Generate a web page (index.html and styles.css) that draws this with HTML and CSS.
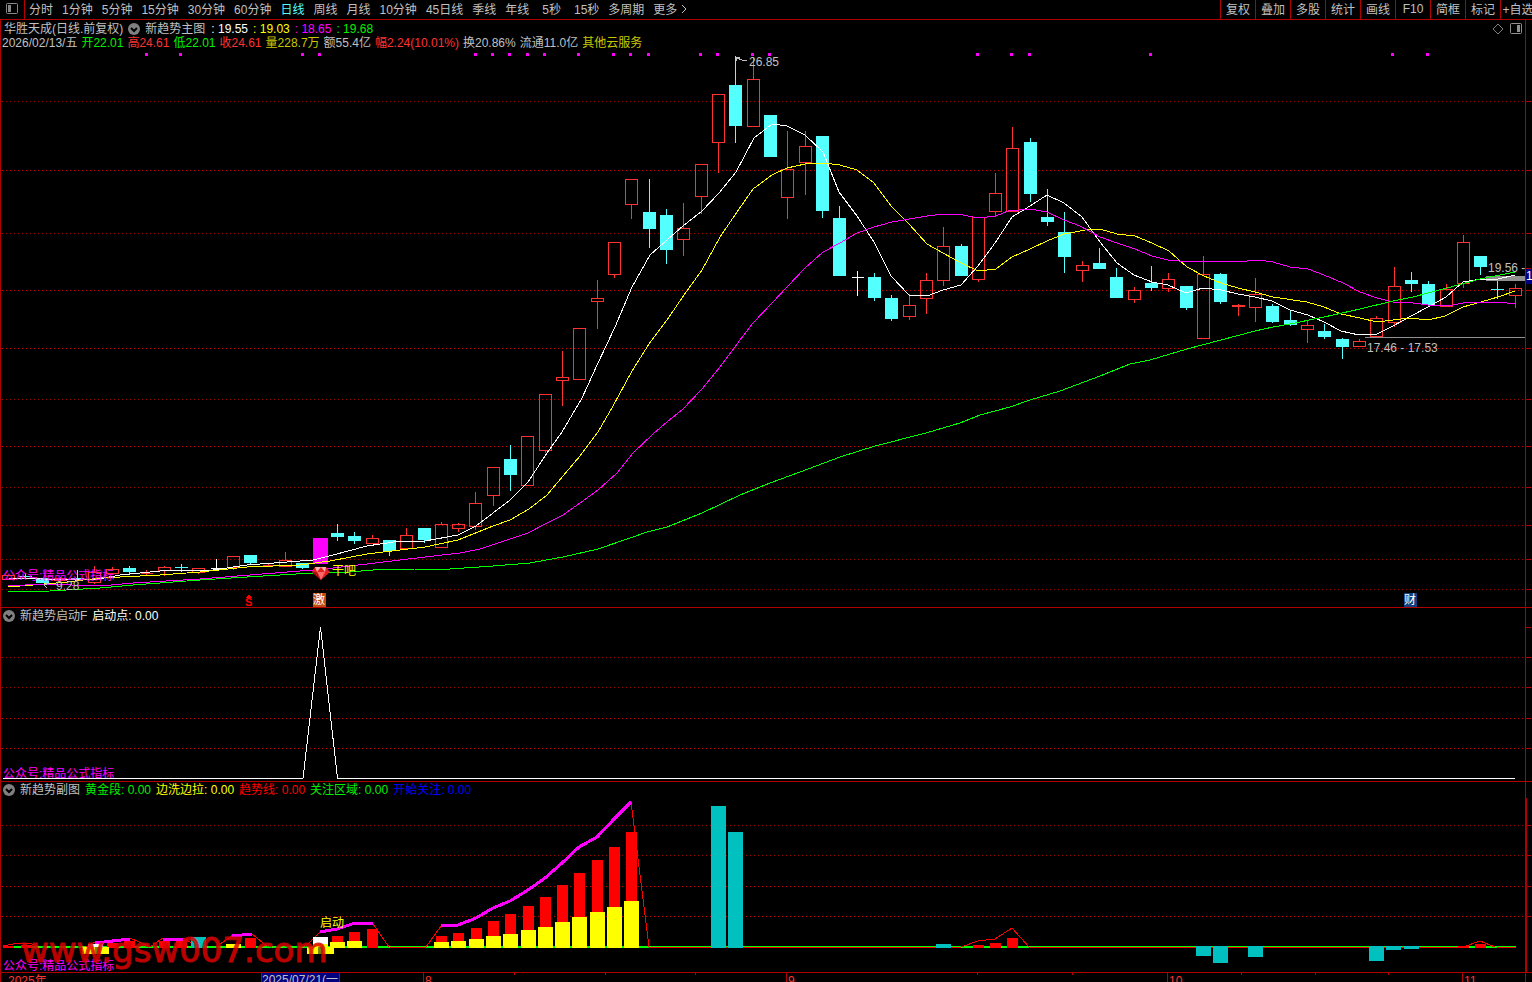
FILE: index.html
```
<!DOCTYPE html>
<html lang="zh-CN">
<head>
    <meta charset="UTF-8">
    <meta name="viewport" content="width=device-width, initial-scale=1.0">
    <title>华胜天成 日线</title>
    <link rel="stylesheet" href="styles.css">
</head>
<body>
    <div class="toolbar">
        <button class="layout-button" aria-label="侧栏">
            <svg width="12" height="12" viewBox="0 0 12 12"><rect x="0.5" y="0.5" width="11" height="10" rx="1" fill="none" stroke="#888"/><rect x="2" y="2" width="3" height="7" fill="#888"/></svg>
        </button>
        <nav class="periods">
            <button>分时</button>
            <button>1分钟</button>
            <button>5分钟</button>
            <button>15分钟</button>
            <button>30分钟</button>
            <button>60分钟</button>
            <button class="active">日线</button>
            <button>周线</button>
            <button>月线</button>
            <button>10分钟</button>
            <button>45日线</button>
            <button>季线</button>
            <button>年线</button>
            <button class="seconds">5秒</button>
            <button class="seconds">15秒</button>
            <button>多周期</button>
            <button class="more">更多<svg width="6" height="10" viewBox="0 0 6 10"><path d="M1 1l4 4-4 4" fill="none" stroke="#c0c0c0"/></svg></button>
        </nav>
        <div class="tools">
            <button>复权</button>
            <button>叠加</button>
            <button>多股</button>
            <button>统计</button>
            <button>画线</button>
            <button>F10</button>
            <button>简框</button>
            <button>标记</button>
            <button>+自选</button>
        </div>
    </div>

    <section class="panel">
        <div class="panel-head main-head">
            <div class="row title-row">
                <span>华胜天成(日线.前复权)</span>
                <button class="fold" aria-label="主图指标"><svg width="12" height="12" viewBox="0 0 12 12"><circle cx="6" cy="6" r="6" fill="#808080"/><path d="M3 5l3 3 3-3" fill="none" stroke="#000" stroke-width="2"/></svg></button>
                <span class="name">新趋势主图</span>
                <span class="white">: 19.55</span>
                <span class="yellow">: 19.03</span>
                <span class="magenta">: 18.65</span>
                <span class="green">: 19.68</span>
                <span class="corner">
                    <svg width="12" height="12" viewBox="0 0 12 12"><path d="M6 1l5 5-5 5-5-5z" fill="none" stroke="#808080"/></svg>
                    <svg width="12" height="12" viewBox="0 0 12 12"><rect x="0.5" y="0.5" width="11" height="10" rx="1" fill="none" stroke="#909090"/><rect x="7" y="2" width="3" height="7" fill="#909090"/></svg>
                </span>
            </div>
            <div class="row quote-row">
                <span>2026/02/13/五</span>
                <span class="green">开22.01</span>
                <span class="red">高24.61</span>
                <span class="green">低22.01</span>
                <span class="red">收24.61</span>
                <span class="gold">量228.7万</span>
                <span>额55.4亿</span>
                <span class="red">幅2.24(10.01%)</span>
                <span>换20.86%</span>
                <span>流通11.0亿</span>
                <span class="gold">其他云服务</span>
            </div>
        </div>
        <svg class="chart" id="main-chart" viewBox="1 50 1531 557"></svg>
    </section>

    <section class="panel">
        <div class="panel-head row">
            <button class="fold" aria-label="启动指标"><svg width="12" height="12" viewBox="0 0 12 12"><circle cx="6" cy="6" r="6" fill="#808080"/><path d="M3 5l3 3 3-3" fill="none" stroke="#000" stroke-width="2"/></svg></button>
            <span>新趋势启动F</span>
            <span class="white">启动点: 0.00</span>
        </div>
        <svg class="chart" id="start-chart" viewBox="1 624 1531 157"></svg>
    </section>

    <section class="panel">
        <div class="panel-head row">
            <button class="fold" aria-label="副图指标"><svg width="12" height="12" viewBox="0 0 12 12"><circle cx="6" cy="6" r="6" fill="#808080"/><path d="M3 5l3 3 3-3" fill="none" stroke="#000" stroke-width="2"/></svg></button>
            <span>新趋势副图</span>
            <span class="green">黄金段: 0.00</span>
            <span class="yellow">边洗边拉: 0.00</span>
            <span class="pure-red">趋势线: 0.00</span>
            <span class="green">关注区域: 0.00</span>
            <span class="blue">开始关注: 0.00</span>
        </div>
        <svg class="chart" id="sub-chart" viewBox="1 798 1531 174"></svg>
    </section>

    <svg class="chart axis" id="axis" viewBox="0 972 1532 22"></svg>

    <script src="chart.js"></script>
</body>
</html>
```
FILE: styles.css
```
* {
    box-sizing: border-box;
}

body {
    margin: 0;
    height: 100vh;
    overflow: hidden;
    background-color: #000;
    color: #c0c0c0;
    font-family: "Liberation Sans", "Noto Sans CJK SC", sans-serif;
    font-size: 12px;
}

button {
    background: none;
    border: none;
    padding: 0;
    color: inherit;
    font: inherit;
    white-space: nowrap;
    cursor: pointer;
}

svg {
    display: block;
}

.toolbar {
    display: flex;
    height: 20px;
    border-bottom: 1px solid #b00000;
    overflow: hidden;
}

.toolbar button {
    padding-bottom: 2px;
}

.toolbar .layout-button {
    width: 25px;
    padding-left: 6px;
    border-right: 1px solid #b00000;
}

.periods {
    display: flex;
    gap: 9px;
    padding-left: 4px;
    flex-grow: 1;
}

.periods .active {
    color: #54ffff;
}

.periods .seconds {
    margin-left: 4px;
}

.more {
    display: flex;
    align-items: center;
    gap: 4px;
}

.tools {
    display: flex;
    width: 312px;
    flex-shrink: 0;
}

.tools button {
    width: 35px;
    flex-shrink: 0;
    border-left: 1px solid #b00000;
}

.panel {
    border-left: 1px solid #b00000;
    border-bottom: 1px solid #b00000;
}

.panel-head {
    margin-right: 6px;
    border-right: 1px solid #b00000;
}

.row {
    display: flex;
    align-items: center;
    gap: 5px;
    height: 16px;
    padding-left: 2px;
    line-height: 14px;
    white-space: nowrap;
}

.main-head {
    padding-top: 2px;
}

.main-head .row {
    height: 14px;
}

.main-head .title-row {
    padding-left: 3px;
}

.main-head .quote-row {
    gap: 4px;
    padding-left: 1px;
}

.name {
    margin-right: 1px;
}

.corner {
    display: flex;
    gap: 6px;
    margin-left: auto;
    padding-right: 3px;
}

.white {
    color: #fff;
}

.yellow {
    color: #ff0;
}

.magenta {
    color: #f0f;
}

.green {
    color: #00f000;
}

.red {
    color: #ff3232;
}

.pure-red {
    color: #f00;
}

.gold {
    color: #c8c800;
}

.blue {
    color: #00f;
}

.chart {
    width: 100%;
    height: auto;
    font-size: 12px;
    shape-rendering: crispEdges;
}

.panel:last-of-type {
    border-bottom: none;
}

.chart .smooth {
    shape-rendering: auto;
}

.site-mark {
    font-family: "DejaVu Sans", sans-serif;
    font-size: 34px;
    fill: #dc0000;
    stroke: #dc0000;
    stroke-width: 1px;
    opacity: 0.85;
}

.small-bold {
    font-size: 11px;
    font-weight: bold;
}
```
FILE: chart.js
```
const RED = '#ff3232';
const CYAN = '#54ffff';
const BORDER = '#b00000';
const TEAL = '#00c0c0';

// x of the i-th trading day
function dayX(i) {
    return Math.floor(8.3 + 17.322 * i) + 0.5;
}

function line(x1, y1, x2, y2, color) {
    return `<line x1="${x1}" y1="${y1}" x2="${x2}" y2="${y2}" stroke="${color}"/>`;
}

function rect(x, y, w, h, fill) {
    return `<rect x="${x}" y="${y}" width="${w}" height="${h}" fill="${fill}"/>`;
}

function poly(points, color, width = 1) {
    return `<polyline points="${points}" fill="none" stroke="${color}" stroke-width="${width}"/>`;
}

function text(x, y, value, color, cls = '') {
    return `<text x="${x}" y="${y}" fill="${color}" class="${cls}">${value}</text>`;
}

function grid(dim, bright) {
    const row = (y, color) =>
        `<line x1="2" y1="${y + 0.5}" x2="1525" y2="${y + 0.5}" stroke="${color}" stroke-dasharray="1 3"/>` +
        line(1526, y + 0.5, 1531, y + 0.5, BORDER);
    return dim.map(y => row(y, '#a00000')).join('') + bright.map(y => row(y, '#c80000')).join('');
}

// [kind, high, top, bottom, low] - r: rising, c: falling, w: flat, m: signal bar
const candles = [
    ['r', 575, 575, 579, 579], ['c', 574, 576, 577, 578], ['c', 578, 578, 583, 583], ['r', 577, 578, 580, 580],
    ['c', 570, 578, 579, 581], ['r', 566, 572, 582, 583], ['r', 567, 569, 573, 574], ['c', 566, 568, 572, 574],
    ['r', 570, 573, 573, 575], ['r', 566, 567, 570, 575], ['c', 564, 567, 568, 572], ['r', 568, 568, 572, 573],
    ['w', 559, 568, 568, 568], ['r', 556, 556, 567, 569], ['c', 555, 555, 563, 564], ['r', 563, 565, 565, 567],
    ['r', 552, 560, 566, 566], ['c', 563, 563, 568, 569], ['m', 538, 538, 564, 564], ['c', 524, 533, 537, 541],
    ['c', 532, 536, 541, 544], ['r', 535, 538, 543, 543], ['c', 540, 540, 551, 556], ['r', 528, 535, 548, 548],
    ['c', 528, 528, 540, 543], ['r', 522, 524, 547, 547], ['r', 523, 524, 528, 531], ['r', 492, 503, 526, 529],
    ['r', 467, 467, 495, 505], ['c', 445, 459, 475, 491], ['r', 436, 436, 485, 485], ['r', 394, 394, 450, 452],
    ['r', 351, 377, 380, 405], ['r', 328, 328, 379, 379], ['r', 280, 298, 301, 328], ['r', 242, 242, 274, 277],
    ['r', 179, 179, 204, 218], ['c', 179, 212, 229, 248], ['c', 209, 215, 250, 264], ['r', 203, 228, 239, 255],
    ['r', 164, 164, 196, 213], ['r', 94, 94, 142, 172], ['c', 56, 85, 126, 143], ['r', 57, 79, 126, 126],
    ['c', 115, 115, 157, 157], ['r', 131, 169, 197, 218], ['r', 131, 146, 162, 194], ['c', 136, 136, 211, 218],
    ['c', 206, 218, 276, 276], ['w', 271, 277, 277, 296], ['c', 273, 277, 298, 301], ['c', 295, 298, 319, 321],
    ['r', 294, 305, 316, 319], ['r', 273, 280, 298, 313], ['r', 227, 246, 280, 285], ['c', 244, 246, 276, 276],
    ['r', 217, 217, 279, 281], ['r', 173, 193, 211, 215], ['r', 127, 148, 211, 211], ['c', 138, 142, 194, 202],
    ['c', 189, 217, 222, 226], ['c', 212, 232, 257, 273], ['r', 261, 265, 270, 281], ['c', 248, 263, 269, 269],
    ['c', 268, 277, 298, 298], ['r', 287, 290, 299, 302], ['c', 266, 283, 288, 291], ['r', 273, 279, 288, 291],
    ['c', 286, 286, 308, 310], ['r', 256, 274, 338, 338], ['c', 273, 274, 302, 304], ['r', 304, 305, 306, 315],
    ['r', 278, 294, 307, 321], ['c', 304, 306, 322, 323], ['c', 311, 320, 325, 326], ['r', 320, 325, 329, 342],
    ['c', 324, 331, 337, 339], ['c', 338, 339, 347, 359], ['r', 339, 341, 346, 346], ['r', 316, 318, 336, 336],
    ['r', 267, 286, 322, 326], ['c', 272, 280, 284, 292], ['c', 281, 284, 305, 305], ['r', 284, 289, 306, 306],
    ['r', 235, 242, 283, 287], ['c', 256, 256, 267, 275], ['c', 281, 289, 290, 299], ['r', 284, 288, 295, 307]
];

const averages = [
    ['#fff', '8,578 43,579 93,580 120,575 160,571 213,570 247,565 287,562 313,560 333,555 367,546 400,541 425,541 458,535 476,526 510,500 528,482 547,453 562,432 582,398 598,363 615,327 632,287 650,255 667,240 683,226 702,211 719,193 736,172 754,138 772,124 787,126 805,135 823,152 839,192 857,216 874,242 891,276 909,295 927,296 943,290 961,285 978,266 995,243 1012,217 1030,206 1047,195 1064,203 1082,217 1100,242 1117,263 1134,275 1152,282 1168,285 1186,293 1203,288 1221,290 1238,294 1255,297 1272,301 1290,310 1308,315 1324,322 1341,331 1359,335 1377,334 1393,326 1411,316 1428,307 1446,297 1463,282 1481,279 1498,279 1515,275'],
    ['#ff0', '8,587 33,585 67,582 100,578 160,575 200,572 247,567 300,565 330,561 367,554 400,550 425,547 458,540 493,526 510,520 529,509 547,495 563,476 580,456 598,432 613,406 632,371 649,344 667,320 684,295 702,270 720,237 737,212 753,189 772,175 787,168 805,164 823,163 840,165 857,170 874,183 892,207 909,224 927,244 943,253 961,263 978,271 996,269 1012,257 1030,249 1047,241 1064,234 1080,231 1091,229 1100,229 1117,234 1135,236 1152,243 1169,251 1187,267 1204,276 1221,283 1238,288 1255,292 1273,297 1307,302 1324,307 1341,314 1360,318 1377,322 1393,320 1410,318 1428,320 1445,316 1463,307 1481,302 1498,297 1515,291'],
    ['#f0f', '8,586 43,584 100,586 133,583 200,579 250,575 287,572 313,570 333,568 367,564 400,560 425,557 460,553 480,549 510,539 528,533 547,523 563,515 580,503 598,490 617,473 633,453 653,434 667,422 683,409 702,389 720,367 740,340 753,323 772,303 788,286 805,268 823,252 840,243 857,233 874,227 892,222 927,216 943,214 963,215 978,218 996,216 1008,211 1030,209 1047,212 1064,220 1080,226 1100,237 1117,243 1135,249 1152,256 1168,260 1179,261 1247,261 1258,260 1273,262 1290,267 1308,269 1324,275 1343,283 1360,292 1377,298 1393,302 1413,303 1428,305 1448,306 1463,303 1483,302 1507,303 1515,303'],
    ['#0f0', '8,592 50,591 100,588 133,585 200,580 247,577 313,573 350,572 373,570 415,569 450,569 493,566 530,563 563,557 598,549 630,538 647,532 667,527 702,513 740,495 770,483 800,472 840,457 875,446 926,433 960,423 980,415 1010,407 1030,400 1060,391 1100,376 1130,364 1150,360 1187,349 1221,340 1255,331 1273,327 1290,324 1324,317 1360,309 1393,301 1413,297 1447,288 1480,279 1515,272']
];

function drawCandle([kind, high, top, bottom, low], i) {
    const x = dayX(i);
    if (kind === 'm') {
        return rect(x - 7.5, top, 15, bottom - top, '#f0f');
    }
    if (kind === 'c') {
        return line(x, high, x, low, CYAN) + rect(x - 6.5, top, 13, bottom - top, CYAN);
    }
    if (top === bottom) {
        const color = kind === 'w' ? '#fff' : RED;
        return line(x, high, x, low, color) + line(x - 6, top + 0.5, x + 6, top + 0.5, color);
    }
    return line(x, high, x, top, RED) + line(x, bottom, x, low + 1, RED) +
        `<rect x="${x - 6}" y="${top + 0.5}" width="12" height="${bottom - top}" fill="none" stroke="${RED}"/>`;
}

function drawMain() {
    const dots = [146, 180, 302, 319, 475, 492, 509, 527, 544, 578, 613, 630, 648, 700, 717, 752, 769, 977, 1011, 1029, 1150, 1392, 1427];
    let out = grid([101, 233, 399, 487, 525, 559, 589], [170, 290, 348, 446]);
    out += dots.map(x => rect(x - 1, 53, 3, 3, '#f0f')).join('');
    out += candles.map(drawCandle).join('');

    // price gap bands
    out += rect(1365, 337, 160, 1, '#909090') + rect(1486, 276, 39, 5, '#909090');
    out += averages.map(([color, points]) => poly(points, color)).join('');
    out += line(1525.5, 50, 1525.5, 607, BORDER);
    out += line(1526, 268.5, 1531, 268.5, BORDER) + rect(1526, 269, 6, 15, '#000080') + text(1526, 280, '1', '#fff');

    out += poly('740,57 736,57 736,61', '#c0c0c0') + poly('737,58 742,60 747,61', '#c0c0c0');
    out += text(749, 66, '26.85', '#c0c0c0') + text(1488, 272, '19.56 -', '#c0c0c0');
    out += text(1367, 352, '17.46 - 17.53', '#c0c0c0');
    out += poly('49,583 44,585 47,588', '#c0c0c0') + text(56, 590, '9.28', '#c0c0c0');
    out += text(3, 580, '公众号:精品公式指标', '#f0f') + text(332, 575, '干吧', '#ff0');

    // signal gem
    out += '<g class="smooth"><path d="M315 567h11l4 5-9 8-9-8z" fill="#e02020"/>' +
        '<path d="M315 567l2 5 4-5 4 5 1-5z" fill="#ffb0b0"/><path d="M317 572h8l-4 8z" fill="#ff6868"/>' +
        '<path d="M312 572l5 0 4 8z" fill="#b01010"/></g>';
    out += '<path d="M245 598l4-3 4 3z" fill="#f00"/>' + text(245, 606, 'S', '#f00', 'small-bold');
    out += rect(313, 593, 13, 14, '#c04a10') + text(313, 604, '激', '#fff');
    out += rect(1404, 593, 13, 14, '#104080') + text(1404, 604, '财', '#fff');
    document.getElementById('main-chart').innerHTML = out;
}

function drawStart() {
    let out = grid([657, 687], [718, 748]);
    out += text(3, 778, '公众号:精品公式指标', '#f0f');
    out += poly('3,778.5 303,778.5 320.5,627 337.5,778.5 1515,778.5', '#fff');
    out += line(1525.5, 624, 1525.5, 781, BORDER) + line(1526, 627.5, 1531, 627.5, BORDER);
    document.getElementById('start-chart').innerHTML = out;
}

function drawSub() {
    const redTops = [
        [8.5, 946], [26.5, 945], [112.5, 943], [129.5, 941], [164.5, 941], [181.5, 940], [250.5, 938],
        [337.5, 936], [354.5, 932], [372.5, 929],
        [441.5, 936], [458.5, 933], [476.5, 928], [493.5, 921], [510.5, 914], [528.5, 906],
        [545.5, 897], [562.5, 885], [579.5, 873], [597.5, 860], [614.5, 847], [631.5, 832],
        [978.5, 945], [995.5, 943], [1012.5, 938], [1463.5, 946], [1480.5, 944]
    ];
    const yellowTops = [
        [233.5, 944], [337.5, 942], [354.5, 941],
        [441.5, 942], [458.5, 941], [476.5, 939], [493.5, 936], [510.5, 934], [528.5, 930],
        [545.5, 927], [562.5, 922], [579.5, 917], [597.5, 912], [614.5, 907], [631.5, 901]
    ];
    const teal = [
        [198.5, 937, 948], [718.5, 806, 948], [735.5, 832, 948], [943.5, 944, 948], [1203.5, 946, 956],
        [1220.5, 946, 963], [1255.5, 946, 957], [1376.5, 946, 961], [1393.5, 946, 950], [1411.5, 946, 949]
    ];
    const thin = [
        '3,946 13,944 20,943 30,943 36,946', '86,947 95,942', '130,938 150,947 163,938', '183,938 199,947',
        '216,947 233,935', '252,934 268,947', '305,947 320,932', '373,924 389,947', '426,947 441,926',
        '631,802 649,947', '961,947 978,941 995,939 1012,928 1029,947', '1454,947 1463,947 1480,941 1495,947'
    ];
    const thick = [
        '95,943 130,939', '163,939 183,939', '232,936 252,934', '320,932 337,929 355,923 373,924',
        '441,926 458,925 476,918 493,908 510,901 528,890 545,878 562,863 579,847 597,837 614,819 631,802'
    ];
    let out = grid([825, 855], [886, 916]);
    out += rect(3, 946, 1513, 1, '#0f0') + rect(3, 947, 1513, 1, '#f00');
    [[14, 390], [426, 649], [961, 1029], [1454, 1497]].forEach(([from, to]) => {
        out += rect(from, 946, to - from, 2, '#0f0');
    });
    out += thin.map(points => poly(points, '#f00')).join('');
    out += redTops.map(([x, y]) => rect(x - 5.5, y, 11, 948 - y, '#f00')).join('');
    out += yellowTops.map(([x, y]) => rect(x - 7.5, y, 15, 948 - y, '#ff0')).join('');
    out += teal.map(([x, top, bottom]) => rect(x - 7.5, top, 15, bottom - top, TEAL)).join('');

    out += rect(88, 944, 15, 3, '#fff') + rect(82, 947, 27, 7, '#ff0') + rect(95, 947, 5, 7, '#808000');
    out += rect(313, 937, 15, 7, '#fff') + rect(313, 944, 15, 3, '#ff0') +
        rect(307, 947, 27, 7, '#ff0') + rect(318, 947, 5, 7, '#808000');
    out += thick.map(points => poly(points, '#f0f', 3)).join('');
    out += text(320, 927, '启动', '#ff0') + text(3, 970, '公众号:精品公式指标', '#f0f');
    out += text(21, 962, 'www.gsw007.com', '#dc0000', 'site-mark');
    out += rect(1525, 798, 2, 174, BORDER);
    document.getElementById('sub-chart').innerHTML = out;
}

function drawAxis() {
    let out = rect(0, 972, 1532, 1, BORDER) + rect(0, 972, 1, 22, BORDER) + rect(1525, 972, 1, 22, BORDER);
    out += [514, 605, 695, 977, 1072, 1241, 1315, 1388].map(x => rect(x, 973, 1, 2, BORDER)).join('');
    out += [[423, '8'], [786, '9'], [1167, '10'], [1462, '11']]
        .map(([x, label]) => rect(x, 973, 1, 21, BORDER) + text(x + 2, 985, label, RED)).join('');
    out += text(8, 985, '2025年', RED);
    out += rect(261, 973, 79, 21, BORDER) + rect(262, 973, 77, 21, '#000080') + text(262, 984, '2025/07/21(一', '#c0c0c0');
    document.getElementById('axis').innerHTML = out;
}

drawMain();
drawStart();
drawSub();
drawAxis();
```
